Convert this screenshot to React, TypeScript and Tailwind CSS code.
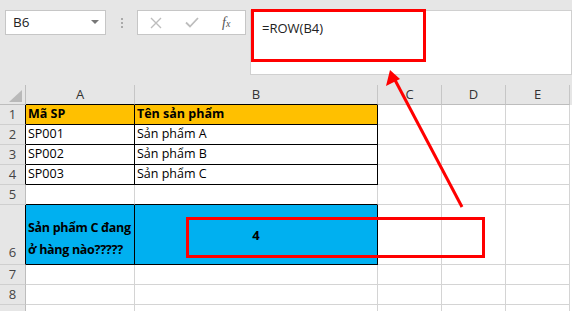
import React from 'react';

const font = { fontFamily: '"Open Sans", "Noto Sans", sans-serif' };

const cols = ['A', 'B', 'C', 'D', 'E'];

function RowHead({ n, tall, dark }: { n?: number; tall?: boolean; dark?: boolean }) {
  return (
    <div
      className={`flex justify-center bg-[#e6e6e6] text-[13px] text-[#444] border-b border-[#cfcfcf] border-r ${
        dark ? 'border-r-black' : 'border-r-[#bdbdbd]'
      } ${tall ? 'items-end pb-0.5' : 'items-center'}`}
    >
      {n}
    </div>
  );
}

function Cell({
  children,
  className = '',
}: {
  children?: React.ReactNode;
  className?: string;
}) {
  return (
    <div className={`border-r border-b border-[#d4d4d4] text-[12.5px] text-black px-0.5 flex items-center ${className}`}>
      {children}
    </div>
  );
}

export default function App() {
  const data = [
    ['SP001', 'Sản phẩm A'],
    ['SP002', 'Sản phẩm B'],
    ['SP003', 'Sản phẩm C'],
  ];

  return (
    <div className="relative w-[572px] h-[311px] overflow-hidden bg-white" style={font}>
      {/* formula bar area */}
      <div className="h-[85px] bg-[#e6e6e6] flex items-start pt-[10px] pl-[5px]">
        <div className="w-[101px] h-[25px] bg-white border border-[#c6c6c6] flex items-center justify-between pl-[7px] pr-[6px]">
          <span className="text-[13.5px] text-[#222]">B6</span>
          <svg width="8" height="5" viewBox="0 0 8 5">
            <path d="M0 0h8L4 4z" fill="#777" />
          </svg>
        </div>
        <div className="w-[31px] h-[25px] flex flex-col items-center justify-center gap-[2px]">
          <span className="w-[2px] h-[2px] bg-[#aaa]" />
          <span className="w-[2px] h-[2px] bg-[#aaa]" />
          <span className="w-[2px] h-[2px] bg-[#aaa]" />
        </div>
        <div className="w-[109px] h-[25px] bg-white border border-[#c6c6c6] flex items-center pl-[12px]">
          <svg width="12" height="12" viewBox="0 0 12 12">
            <path d="M1 1l10 10M11 1L1 11" stroke="#bdbdbd" strokeWidth="1.4" />
          </svg>
          <svg className="ml-[23px]" width="14" height="11" viewBox="0 0 14 11">
            <path d="M1 5.5l4 4L13 1" stroke="#bdbdbd" strokeWidth="1.8" fill="none" />
          </svg>
          <span className="ml-[23px] text-[14px] italic text-[#555]" style={{ fontFamily: '"Liberation Serif", serif' }}>
            f<span className="text-[10px]">x</span>
          </span>
        </div>
        <div className="ml-[4px] flex-1 h-[65px] bg-white border border-[#d0d0d0] pl-[11px] pt-[4px]">
          <span className="text-[13px] text-[#222]">=ROW(B4)</span>
        </div>
      </div>

      {/* sheet */}
      <div className="grid grid-cols-[26px_109px_243px_64px_64px_64px_2px] grid-rows-[20px_20px_20px_20px_20px_20px_60px_20px_20px_20px]">
        {/* column headers */}
        <div className="bg-[#e6e6e6] border-r border-b border-[#bdbdbd] relative">
          <svg className="absolute right-[3px] bottom-[2px]" width="13" height="12" viewBox="0 0 13 12">
            <path d="M13 0v12H0z" fill="#b9b9b9" />
          </svg>
        </div>
        {cols.map((c, i) => (
          <div
            key={c}
            className={`bg-[#e6e6e6] flex items-center justify-center text-[13px] text-[#333] border-r border-[#c6c6c6] border-b ${
              i < 2 ? 'border-b-black' : 'border-b-[#bdbdbd]'
            }`}
          >
            {c}
          </div>
        ))}
        <div className="bg-[#e6e6e6]" />

        {/* row 1 */}
        <RowHead n={1} dark />
        <Cell className="bg-[#ffc000] font-bold border-r-black border-b-black">Mã SP</Cell>
        <Cell className="bg-[#ffc000] font-bold border-r-black border-b-black">Tên sản phẩm</Cell>
        <Cell />
        <Cell />
        <Cell />
        <div />

        {data.map((r, i) => (
          <React.Fragment key={r[0]}>
            <RowHead n={i + 2} dark />
            <Cell className="border-r-black border-b-black">{r[0]}</Cell>
            <Cell className="border-r-black border-b-black">{r[1]}</Cell>
            <Cell />
            <Cell />
            <Cell />
            <div />
          </React.Fragment>
        ))}

        {/* row 5 */}
        <RowHead n={5} />
        <Cell className="border-b-black" />
        <Cell className="border-b-black" />
        <Cell />
        <Cell />
        <Cell />
        <div />

        {/* row 6 */}
        <RowHead n={6} tall dark />
        <Cell className="bg-[#00b0f0] font-bold border-r-black border-b-black leading-[22px] items-end pb-[3px] whitespace-nowrap tracking-[-0.3px]">
          <span>
            Sản phẩm C đang
            <br />ở hàng nào?????
          </span>
        </Cell>
        <Cell className="bg-[#00b0f0] font-bold text-[13px] border-r-black border-b-black justify-center pt-[3px]">4</Cell>
        <Cell />
        <Cell />
        <Cell />
        <div />

        {[7, 8, 0].map((n) => (
          <React.Fragment key={n}>
            <RowHead n={n || undefined} />
            <Cell />
            <Cell />
            <Cell />
            <Cell />
            <Cell />
            <div />
          </React.Fragment>
        ))}
      </div>

      {/* annotations */}
      <div className="absolute left-[251px] top-[9px] w-[175px] h-[53px] border-[3px] border-[#ff0000]" />
      <div className="absolute left-[186px] top-[217px] w-[299px] h-[41px] border-[3px] border-[#ff0000]" />
      <svg className="absolute left-0 top-0 pointer-events-none" width="572" height="311">
        <line x1="462" y1="207" x2="395" y2="80" stroke="#ff0000" strokeWidth="3" />
        <path d="M390 70 L386 86 L400 79 Z" fill="#ff0000" />
      </svg>
    </div>
  );
}
